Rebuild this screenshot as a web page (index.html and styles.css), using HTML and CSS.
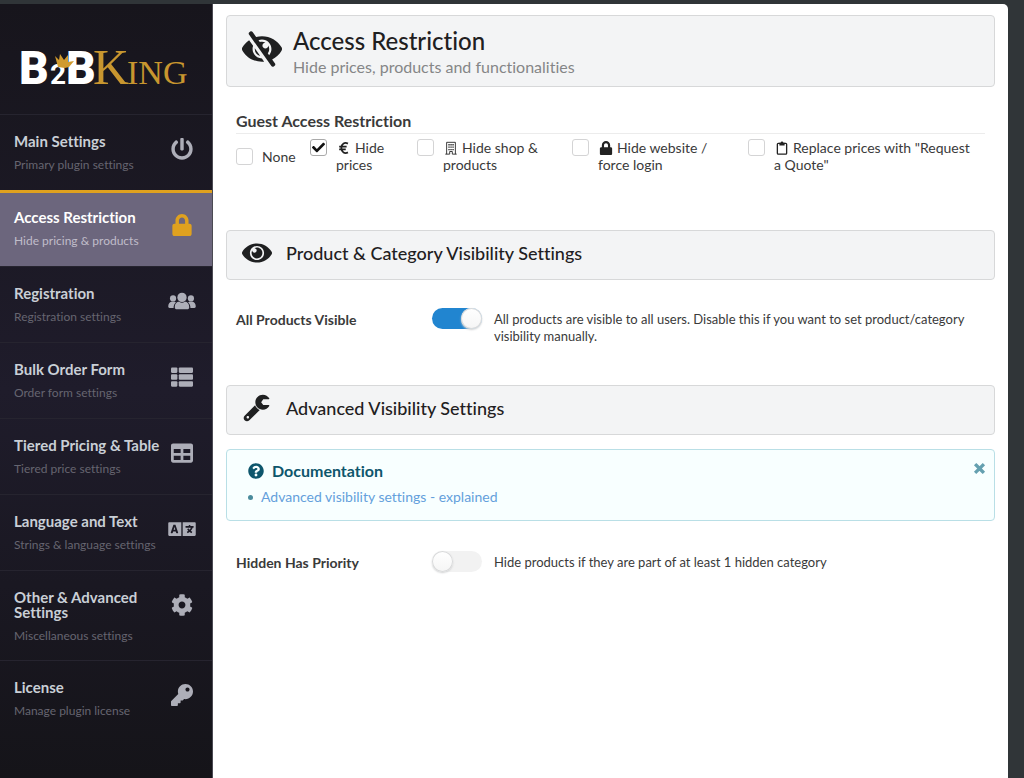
FILE: index.html
```html
<!DOCTYPE html>
<html lang="en">
<head>
<meta charset="utf-8">
<meta name="viewport" content="width=device-width, initial-scale=1">
<title>B2BKing – Access Restriction</title>
<link rel="stylesheet" href="styles.css">
</head>
<body>
<div class="app">
  <aside class="sidebar">
    <div class="brand">
      <svg class="logo" viewBox="0 0 170 44" role="img" aria-label="B2BKing">
        <text class="logo-b" x="-3" y="39">B</text>
        <text class="logo-two" x="28" y="39">2</text>
        <text class="logo-b" x="44" y="39">B</text>
        <text class="logo-k" x="71" y="39">K</text>
        <text class="logo-ing" x="105" y="39">ING</text>
        <path fill="#d09a2e" d="M36 22L33 11l4 4 1-6 4 6 4-5 0 7 6-1-5 6-4 1z"/>
      </svg>
    </div>
    <nav class="menu">
      <a class="item" href="#main"><span class="label"><span class="title">Main Settings</span><span class="desc">Primary plugin settings</span></span>
        <svg class="glyph" viewBox="0 0 512 512"><path d="M400 54.1c63 45 104 118.6 104 201.9 0 136.8-110.8 247.7-247.500 248C120 504.300 8.200 393 8 256.400 7.900 173.100 48.900 99.300 111.800 54.200c11.700-8.300 28-4.800 35 7.700L162.600 90c5.900 10.500 3.100 23.800-6.600 31-41.500 30.800-68 79.600-68 134.900-.1 92.300 74.500 168.100 168 168.100 91.600 0 168.600-74.200 168-169.100-.3-51.800-24.700-101.800-68.100-134-9.700-7.200-12.400-20.500-6.500-30.900l15.800-28.100c7-12.400 23.200-16.100 34.800-7.800zM296 264V24c0-13.300-10.700-24-24-24h-32c-13.300 0-24 10.700-24 24v240c0 13.300 10.700 24 24 24h32c13.300 0 24-10.700 24-24z"/></svg></a>
      <a class="item active" href="#access" aria-current="page"><span class="label"><span class="title">Access Restriction</span><span class="desc">Hide pricing &amp; products</span></span>
        <svg class="glyph" viewBox="0 0 448 512"><path d="M400 224h-24v-72C376 68.200 307.800 0 224 0S72 68.200 72 152v72H48c-26.500 0-48 21.500-48 48v192c0 26.500 21.500 48 48 48h352c26.500 0 48-21.500 48-48V272c0-26.500-21.500-48-48-48zm-104 0H152v-72c0-39.700 32.300-72 72-72s72 32.300 72 72v72z"/></svg></a>
      <a class="item" href="#registration"><span class="label"><span class="title">Registration</span><span class="desc">Registration settings</span></span>
        <svg class="glyph" viewBox="0 0 640 512"><circle cx="112" cy="196" r="72"/><circle cx="528" cy="196" r="72"/><circle cx="320" cy="172" r="108"/><path d="M0 380c0-66 36-106 90-106h44c18 0 34 6 46 14-38 28-56 66-56 132H30c-18 0-30-14-30-40zM640 380c0-66-36-106-90-106h-44c-18 0-34 6-46 14 38 28 56 66 56 132h94c18 0 30-14 30-40zM152 400c0-76 44-124 104-124 20 14 42 20 64 20s44-6 64-20c60 0 104 48 104 124 0 34-18 50-48 50H200c-30 0-48-16-48-50z"/></svg></a>
      <a class="item" href="#bulk"><span class="label"><span class="title">Bulk Order Form</span><span class="desc">Order form settings</span></span>
        <svg class="glyph" viewBox="0 0 512 512"><rect x="0" y="32" width="149" height="128" rx="24"/><rect x="0" y="192" width="149" height="128" rx="24"/><rect x="0" y="352" width="149" height="128" rx="24"/><rect x="181" y="32" width="331" height="128" rx="24"/><rect x="181" y="192" width="331" height="128" rx="24"/><rect x="181" y="352" width="331" height="128" rx="24"/></svg></a>
      <a class="item" href="#tiered"><span class="label"><span class="title">Tiered Pricing &amp; Table</span><span class="desc">Tiered price settings</span></span>
        <svg class="glyph" viewBox="0 0 512 512"><path d="M464 32H48C21.490 32 0 53.490 0 80v352c0 26.510 21.490 48 48 48h416c26.510 0 48-21.490 48-48V80c0-26.510-21.490-48-48-48zM224 416H64v-96h160v96zm0-160H64v-96h160v96zm224 160H288v-96h160v96zm0-160H288v-96h160v96z"/></svg></a>
      <a class="item" href="#language"><span class="label"><span class="title">Language and Text</span><span class="desc">Strings &amp; language settings</span></span>
        <svg class="glyph" viewBox="0 0 640 512"><path d="M152.100 236.200c-3.500-12.100-7.800-33.200-7.800-33.200h-.5s-4.300 21.100-7.800 33.200l-11.100 37.500H163zM616 96H336v320h280c13.300 0 24-10.700 24-24V120c0-13.300-10.700-24-24-24zm-24 120c0 6.600-5.400 12-12 12h-11.400c-6.900 23.600-21.700 47.400-42.700 69.900 8.400 6.400 17.100 12.500 26.100 18 5.500 3.400 7.300 10.500 4.100 16.200l-7.900 13.900c-3.400 5.900-10.900 7.800-16.700 4.300-12.600-7.800-24.500-16.100-35.400-24.900-10.900 8.700-22.700 17.100-35.400 24.900-5.800 3.500-13.300 1.600-16.700-4.300l-7.900-13.900c-3.200-5.600-1.400-12.800 4.200-16.200 9.300-5.700 18-11.700 26.100-18-7.900-8.400-14.900-17-21-25.700-4-5.700-2.200-13.600 3.700-17.100l6.500-3.900 7.300-4.300c5.400-3.200 12.400-1.700 16 3.400 5 7 10.800 14 17.400 20.900 13.500-14.200 23.800-28.900 30-43.200H412c-6.600 0-12-5.400-12-12v-16c0-6.600 5.400-12 12-12h64v-16c0-6.600 5.400-12 12-12h16c6.600 0 12 5.400 12 12v16h64c6.600 0 12 5.400 12 12zM0 120v272c0 13.300 10.700 24 24 24h280V96H24c-13.300 0-24 10.700-24 24zm58.900 216.100L116.400 167c1.700-4.900 6.200-8.100 11.400-8.100h32.500c5.100 0 9.700 3.300 11.400 8.100l57.500 169.100c2.600 7.800-3.100 15.900-11.400 15.900h-22.900a12 12 0 0 1-11.500-8.600l-9.400-31.900h-60.200l-9.100 31.800c-1.500 5.100-6.200 8.700-11.500 8.700H70.300c-8.200 0-14-8.100-11.400-15.900z"/></svg></a>
      <a class="item" href="#other"><span class="label"><span class="title">Other &amp; Advanced Settings</span><span class="desc">Miscellaneous settings</span></span>
        <svg class="glyph" viewBox="0 0 512 512"><path d="M487.400 315.700l-42.600-24.600c4.300-23.200 4.300-47 0-70.200l42.600-24.600c4.900-2.800 7.100-8.600 5.500-14-11.100-35.600-30-67.800-54.700-94.600-3.800-4.100-10-5.100-14.800-2.300L380.800 110c-17.900-15.400-38.500-27.300-60.800-35.100V25.800c0-5.600-3.900-10.500-9.400-11.700-36.700-8.200-74.300-7.800-109.200 0-5.500 1.200-9.400 6.100-9.400 11.700V75c-22.200 7.900-42.800 19.800-60.800 35.100L88.700 85.500c-4.900-2.800-11-1.900-14.800 2.300-24.700 26.700-43.600 58.900-54.700 94.600-1.700 5.400.6 11.200 5.500 14L67.300 221c-4.300 23.200-4.300 47 0 70.200l-42.600 24.600c-4.900 2.800-7.100 8.600-5.500 14 11.100 35.600 30 67.800 54.700 94.600 3.800 4.100 10 5.100 14.800 2.300l42.600-24.600c17.900 15.400 38.500 27.300 60.800 35.100v49.200c0 5.600 3.900 10.500 9.400 11.700 36.700 8.200 74.300 7.800 109.200 0 5.500-1.200 9.400-6.100 9.400-11.700v-49.200c22.200-7.900 42.800-19.800 60.800-35.100l42.600 24.600c4.900 2.800 11 1.900 14.800-2.300 24.700-26.700 43.600-58.900 54.700-94.600 1.500-5.500-.7-11.300-5.600-14.100zM256 336c-44.100 0-80-35.900-80-80s35.900-80 80-80 80 35.900 80 80-35.900 80-80 80z"/></svg></a>
      <a class="item" href="#license"><span class="label"><span class="title">License</span><span class="desc">Manage plugin license</span></span>
        <svg class="glyph" viewBox="0 0 512 512"><path d="M512 176C512 273.200 433.200 352 336 352c-11.220 0-22.190-1.062-32.827-3.069l-24.012 27.014A24 24 0 0 1 261.223 384H224v40c0 13.255-10.745 24-24 24h-40v40c0 13.255-10.745 24-24 24H24c-13.255 0-24-10.745-24-24v-78.059c0-6.365 2.529-12.470 7.029-16.971l161.802-161.802C163.108 213.814 160 195.271 160 176 160 78.798 238.797 0 336 0 433.488 0 512 78.511 512 176zM336 128c0 26.510 21.490 48 48 48s48-21.490 48-48-21.490-48-48-48-48 21.490-48 48z"/></svg></a>
    </nav>
  </aside>

  <main class="content">
    <header class="panel hero">
      <svg class="hero-icon" viewBox="0 0 576 512"><path d="M286.693 391.984l32.579 46.542A333.958 333.958 0 0 1 288 440C168.190 440 63.031 376.051 6.646 280.369a47.999 47.999 0 0 1 0-48.739c24.023-40.766 56.913-75.775 96.024-102.537l57.077 81.539C154.736 224.820 152 240.087 152 256c0 74.736 60.135 135.282 134.693 135.984zm282.661-111.615c-31.667 53.737-78.747 97.460-135.175 125.475l.011.015 41.470 59.200c7.600 10.860 4.960 25.820-5.900 33.420l-13.110 9.180c-10.860 7.600-25.820 4.960-33.420-5.900L100.340 46.940c-7.600-10.860-4.960-25.820 5.900-33.420l13.110-9.180c10.860-7.600 25.820-4.960 33.420 5.900l51.038 72.617C230.680 75.776 258.905 72 288 72c119.810 0 224.969 63.949 281.354 159.631a48.002 48.002 0 0 1 0 48.738zM424 256c0-75.174-60.838-136-136-136-17.939 0-35.056 3.473-50.729 9.772l19.299 27.058c25.869-8.171 55.044-6.163 80.400 7.410h-.030c-23.650 0-42.820 19.170-42.820 42.820 0 23.626 19.147 42.820 42.820 42.820 23.650 0 42.820-19.170 42.820-42.820v-.030c18.462 34.490 16.312 77.914-8.250 110.950v.010l19.314 27.061C411.496 321.200 424 290.074 424 256zM262.014 356.727l-77.530-110.757c-5.014 52.387 29.314 98.354 77.530 110.757z"/></svg>
      <div>
        <h1 class="hero-title">Access Restriction</h1>
        <p class="hero-sub">Hide prices, products and functionalities</p>
      </div>
    </header>

    <fieldset class="guest">
      <legend class="guest-title">Guest Access Restriction</legend>
      <div class="options">
        <label class="option option-single"><span class="check"><input type="checkbox"></span><span>None</span></label>
        <label class="option"><span class="check"><input type="checkbox" checked><svg viewBox="0 0 512 512"><path d="M173.898 439.404l-166.400-166.400c-9.997-9.997-9.997-26.206 0-36.204l36.203-36.204c9.997-9.998 26.207-9.998 36.204 0L192 312.690 432.095 72.596c9.997-9.997 26.207-9.997 36.204 0l36.203 36.204c9.997 9.997 9.997 26.206 0 36.204l-294.400 294.401c-9.998 9.997-26.207 9.997-36.204-.001z"/></svg></span><span><svg class="inline-icon" viewBox="0 0 16 16"><path fill="none" stroke="currentColor" stroke-width="2" d="M12.500 3C9 1 5 3 5 8s4 7 7.500 5M2.500 6.500H11M2.500 9.500H10"/></svg>Hide prices</span></label>
        <label class="option"><span class="check"><input type="checkbox"></span><span><svg class="inline-icon" viewBox="0 0 16 16"><path fill="none" stroke="currentColor" d="M3 15V1.500h10V15M1.500 15h5v-3h3v3h5"/><path d="M5 3.500h1.500V5H5zM7.300 3.500h1.500V5H7.300zM9.600 3.500h1.500V5H9.600zM5 6.200h1.500v1.500H5zM7.300 6.200h1.500v1.500H7.300zM9.600 6.200h1.500v1.500H9.600zM5 9h1.500v1.500H5zM7.300 9h1.500v1.500H7.300zM9.600 9h1.500v1.500H9.600z"/></svg>Hide shop &amp; products</span></label>
        <label class="option"><span class="check"><input type="checkbox"></span><span><svg class="inline-icon" viewBox="-32 0 512 512"><path d="M400 224h-24v-72C376 68.200 307.800 0 224 0S72 68.200 72 152v72H48c-26.500 0-48 21.500-48 48v192c0 26.500 21.500 48 48 48h352c26.500 0 48-21.500 48-48V272c0-26.500-21.500-48-48-48zm-104 0H152v-72c0-39.700 32.300-72 72-72s72 32.300 72 72v72z"/></svg>Hide website / force login</span></label>
        <label class="option option-last"><span class="check"><input type="checkbox"></span><span><svg class="inline-icon" viewBox="0 0 16 16"><rect x="2.700" y="2.700" width="10.600" height="12.300" rx="1" fill="none" stroke="currentColor" stroke-width="1.500"/><path d="M5 2h1.500a1.500 1.500 0 0 1 3 0H11v3H5z"/></svg>Replace prices with "Request a&nbsp;Quote"</span></label>
      </div>
    </fieldset>

    <h2 class="panel section">
      <svg class="section-icon" viewBox="0 0 576 512"><path d="M569.354 231.631C512.969 135.949 407.810 72 288 72 168.140 72 63.004 135.994 6.646 231.631a47.999 47.999 0 0 0 0 48.739C63.031 376.051 168.190 440 288 440c119.860 0 224.996-63.994 281.354-159.631a47.997 47.997 0 0 0 0-48.738zM288 392c-75.162 0-136-60.827-136-136 0-75.162 60.826-136 136-136 75.162 0 136 60.826 136 136 0 75.162-60.826 136-136 136zm104-136c0 57.438-46.562 104-104 104s-104-46.562-104-104c0-17.708 4.431-34.379 12.236-48.973l-.001.032c0 23.651 19.173 42.823 42.824 42.823s42.824-19.173 42.824-42.823c0-23.651-19.173-42.824-42.824-42.824l-.032.001C253.621 156.431 270.292 152 288 152c57.438 0 104 46.562 104 104z"/></svg>
      Product &amp; Category Visibility Settings
    </h2>
    <div class="setting">
      <label class="setting-name" for="all-visible">All Products Visible</label>
      <input class="toggle" type="checkbox" id="all-visible" checked>
      <span class="setting-help">All products are visible to all users. Disable this if you want to set product/category visibility manually.</span>
    </div>

    <h2 class="panel section">
      <svg class="section-icon" viewBox="-32 -32 576 576"><path d="M481.156 200c9.300 0 15.120 10.155 10.325 18.124C466.295 259.992 420.419 288 368 288c-79.222 0-143.501-63.974-143.997-143.079C223.505 65.469 288.548 0 368 0c52.362 0 98.196 27.949 123.400 69.743C496.240 77.766 490.523 88 481.154 88H376l-40 56 40 56h105.156zm-171.649 93.003L109.255 493.255c-24.994 24.993-65.515 24.994-90.510 0-24.993-24.994-24.993-65.516 0-90.510L218.991 202.500c16.160 41.197 49.303 74.335 90.516 90.503zM104 432c0-13.255-10.745-24-24-24s-24 10.745-24 24 10.745 24 24 24 24-10.745 24-24z"/></svg>
      Advanced Visibility Settings
    </h2>
    <section class="docs">
      <div>
        <h3 class="docs-title"><svg class="docs-icon" viewBox="0 0 512 512"><path d="M504 256c0 136.997-111.043 248-248 248S8 392.997 8 256C8 119.083 119.043 8 256 8s248 111.083 248 248zM262.655 90c-54.497 0-89.255 22.957-116.549 63.758-3.536 5.286-2.353 12.415 2.715 16.258l34.699 26.310c5.205 3.947 12.621 3.008 16.665-2.122 17.864-22.658 30.113-35.797 57.303-35.797 20.429 0 45.698 13.148 45.698 32.958 0 14.976-12.363 22.667-32.534 33.976C247.128 238.528 216 254.941 216 296v4c0 6.627 5.373 12 12 12h56c6.627 0 12-5.373 12-12v-1.333c0-28.462 83.186-29.647 83.186-106.667 0-58.002-60.165-102-116.531-102zM256 338c-25.365 0-46 20.635-46 46 0 25.364 20.635 46 46 46s46-20.636 46-46c0-25.365-20.635-46-46-46z"/></svg>Documentation</h3>
        <ul class="docs-list"><li><a href="#explained">Advanced visibility settings - explained</a></li></ul>
      </div>
      <button class="close" type="button" aria-label="Close"><svg viewBox="0 0 12 12"><path d="M3 3l6 6M9 3l-6 6"/></svg></button>
    </section>
    <div class="setting">
      <label class="setting-name" for="hidden-priority">Hidden Has Priority</label>
      <input class="toggle" type="checkbox" id="hidden-priority">
      <span class="setting-help">Hide products if they are part of at least 1 hidden category</span>
    </div>
  </main>
</div>
</body>
</html>
```
FILE: styles.css
```css
* { box-sizing: border-box; }

body {
  margin: 0;
  background: #303538;
  color: #3a3a3a;
  font-family: Lato, "Liberation Sans", sans-serif;
  font-size: 14px;
  font-variant-ligatures: none;
  line-height: 17px;
}

h1, h2, h3, p { margin: 0; }
svg { fill: currentColor; flex: none; }

.app {
  display: flex;
  min-height: 100vh;
  padding: 4px 16px 0 0;
}

/* Sidebar */
.sidebar {
  width: 213px;
  flex: none;
  background: linear-gradient(#17151c, #1f1c2b 50%, #151419);
  border-right: 1px solid #4b4a53;
}
.brand { padding: 41px 0 25px 22px; }
.logo { display: block; width: 170px; height: 44px; overflow: visible; }
.logo-b { font: 900 46px Roboto, sans-serif; fill: #fff; }
.logo-two { font: 700 28px Roboto, sans-serif; fill: #fff; }
.logo-k { font: 50px "Liberation Serif", serif; fill: #c8962f; }
.logo-ing { font: 34px "Liberation Serif", serif; fill: #c8962f; }

.item {
  display: flex;
  align-items: flex-start;
  justify-content: space-between;
  min-height: 76px;
  padding: 19px 13px 17px 14px;
  border-top: 1px solid #26242f;
  color: #adaeb8;
  text-decoration: none;
}
.label { flex: 1; }
.title {
  display: block;
  color: #c9cfd6;
  font-size: 15px;
  font-weight: 700;
  line-height: 15px;
}
.desc {
  display: block;
  margin-top: 8px;
  color: #666570;
  font-size: 12px;
  line-height: 15px;
}
.glyph { width: 34px; height: 22px; margin-top: 4px; }
.active {
  padding-top: 17px;
  background: #6c667d;
  border-top: 3px solid #dfa11f;
  color: #dfa11f;
}
.active .title { color: #fff; }
.active .desc { color: #c0bdca; }

/* Content */
.content {
  flex: 1;
  min-width: 0;
  padding: 11px 13px;
  background: #fff;
  border-top-right-radius: 5px;
}
.panel {
  display: flex;
  align-items: center;
  background: #f3f4f5;
  border: 1px solid #d7d8d9;
  border-radius: 4px;
  color: #1f2021;
}
.hero { align-items: flex-start; gap: 11px; min-height: 72px; padding: 9px 15px; }
.hero-icon { width: 40px; height: 36px; margin-top: 6px; }
.hero-title { font-size: 24px; font-weight: 500; line-height: 32px; }
.hero-sub { color: #858687; font-size: 16px; line-height: 20px; }

.guest { margin: 0; padding: 24px 10px 0; border: 0; min-width: 0; }
.guest-title {
  float: left;
  width: 100%;
  padding: 0 0 3px;
  border-bottom: 1px solid #ececec;
  font-size: 16px;
  font-weight: 700;
  line-height: 19px;
}
.options {
  clear: both;
  display: grid;
  grid-template-columns: 74px 107px 155px 176px 1fr;
  padding-top: 5px;
}
.option { display: flex; align-items: flex-start; gap: 9px; padding-right: 16px; }
.option-single { align-items: center; padding-right: 0; }
.option-last { padding-right: 0; }
.check { position: relative; flex: none; height: 17px; }
.check input {
  appearance: none;
  display: block;
  width: 17px;
  height: 17px;
  margin: 0;
  background: #fff;
  border: 1px solid #d4d4d5;
  border-radius: 3px;
}
.check input:checked { border-color: #aaa; }
.check svg { position: absolute; top: 2px; left: 2px; width: 13px; height: 13px; fill: #111; }
.inline-icon { width: 14px; height: 14px; margin: 0 4px 0 1px; vertical-align: -2px; color: #222; }

.section {
  gap: 14px;
  min-height: 50px;
  padding: 0 15px 4px;
  font-size: 18px;
  font-weight: 500;
  line-height: 24px;
}
.guest + .section { margin-top: 57px; }
.setting + .section { margin-top: 40px; }
.section-icon { width: 30px; height: 30px; }

.setting {
  display: grid;
  grid-template-columns: 184px 50px 1fr;
  column-gap: 12px;
  align-items: start;
  padding: 28px 10px 0;
}
.setting-name { padding-top: 3px; font-weight: 700; }
.setting-help { padding-top: 3px; font-size: 13px; }
.toggle {
  appearance: none;
  width: 50px;
  height: 21px;
  margin: 0;
  background: #f2f2f2;
  border-radius: 11px;
}
.toggle::before {
  content: "";
  display: block;
  width: 21px;
  height: 21px;
  border-radius: 50%;
  background: linear-gradient(#fff, #f5f5f5);
  box-shadow: 0 0 0 1px #d8d9da inset, 0 1px 2px #cfd0d1;
}
.toggle:checked { background: #2185d0; }
.toggle:checked::before { margin-left: auto; }

.docs {
  display: flex;
  justify-content: space-between;
  align-items: flex-start;
  margin-top: 14px;
  min-height: 72px;
  padding: 11px 8px 12px 21px;
  background: #f8ffff;
  border: 1px solid #b9dfe6;
  border-radius: 4px;
}
.docs-title {
  display: flex;
  align-items: center;
  gap: 8px;
  color: #0e566c;
  font-size: 16px;
  line-height: 19px;
}
.docs-icon { width: 16px; height: 16px; }
.docs-list { margin: 8px 0 0; padding: 0 0 0 13px; color: #276f86; }
.docs-list li { position: relative; list-style: none; }
.docs-list li::before {
  content: "";
  position: absolute;
  left: -13px;
  top: 7px;
  width: 5px;
  height: 5px;
  border-radius: 50%;
  background: #4a8b9c;
}
.docs-list a { color: #649fdc; text-decoration: none; }
.close { padding: 1px 0 0; border: 0; background: none; }
.close svg { display: block; width: 13px; height: 13px; stroke: #65a0b0; stroke-width: 3; stroke-linecap: square; }
.docs + .setting { padding-top: 30px; }
```
